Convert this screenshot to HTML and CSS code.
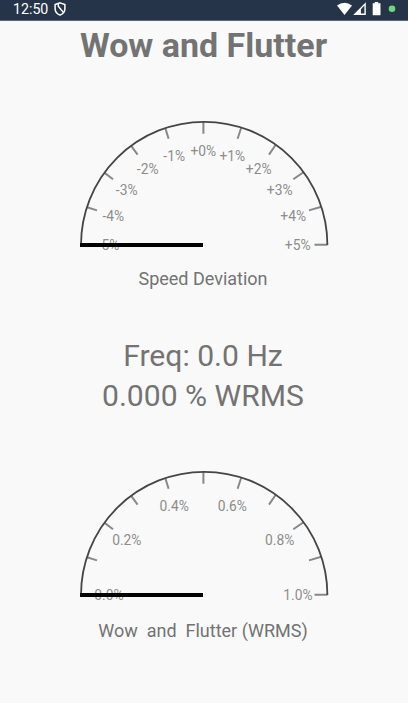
FILE: index.html
```
<!DOCTYPE html>
<html lang="en">
<head>
<meta charset="utf-8">
<title>Wow and Flutter</title>
<link rel="stylesheet" href="styles.css">
</head>
<body>
<header class="status">
  <span class="clock">12:50</span>
  <svg class="shield" width="12" height="14" viewBox="0 0 12 14"><path d="M6 .9 10.900 2.600V6.500Q10.900 11.200 6 13.100Q1.100 11.200 1.100 6.500V2.600Z"/><path d="M4.300 1.600V4.200L9.300 10.400"/></svg>
  <svg class="signals" width="60" height="16" viewBox="0 0 60 16"><path d="M0 4.500Q7.500-.8 15 4.500L7.500 14Z"/><path fill-rule="evenodd" d="M28.800 1.200V14H16.200ZM27.400 4.600 23.900 8.200V12.600H27.400Z"/><path d="M37.800 1H41.200V2.300H43.500V14.200H35.700V2.300H37.800Z"/><circle class="dot" cx="55" cy="7.700" r="3.300"/></svg>
</header>
<main class="screen">
  <h1 class="title">Wow and Flutter</h1>
  <svg class="gauge" width="260" height="140" viewBox="74 114 260 140">
    <g class="ticks">
      <path d="M203.400 122V133.700M165.200 127.800 168.600 138.800M131 145.600 137.600 154.600M104.300 172.600 113 179.300M87 207.300 97 210.400M241.200 127.800 237.600 138.800M275.600 145 269 154.600M303.500 172.300 293.300 179.300M321.300 206.800 309 210.400M327.400 244.800H314.500"/>
    </g>
    <path class="arc" d="M81 245A123.200 123.200 0 0 1 327.400 245"/>
    <g class="labels">
      <text x="108.600" y="250">-5%</text><text x="113.300" y="220.700">-4%</text><text x="126.700" y="194.500">-3%</text><text x="147.700" y="174">-2%</text><text x="174.200" y="160.500">-1%</text><text x="203.300" y="155.500">+0%</text><text x="232.300" y="160.500">+1%</text><text x="258.700" y="174">+2%</text><text x="279.700" y="194.500">+3%</text><text x="293.200" y="220.700">+4%</text><text x="297.700" y="250">+5%</text>
    </g>
    <path class="needle" d="M80 245H203"/>
  </svg>
  <p class="caption">Speed Deviation</p>
  <div class="readout"><p>Freq: 0.0 Hz</p><p>0.000 % WRMS</p></div>
  <svg class="gauge" width="260" height="140" viewBox="74 114 260 140">
    <g class="ticks">
      <path d="M203.400 122V133.700M165.200 127.800 168.600 138.800M131 145.600 137.600 154.600M104.300 172.600 113 179.300M87 207.300 97 210.400M241.200 127.800 237.600 138.800M275.600 145 269 154.600M303.500 172.300 293.300 179.300M321.300 206.800 309 210.400M327.400 244.800H314.500"/>
    </g>
    <path class="arc" d="M81 245A123.200 123.200 0 0 1 327.400 245"/>
    <g class="labels">
      <text x="109" y="250">0.0%</text><text x="126.800" y="194.500">0.2%</text><text x="174.200" y="160.500">0.4%</text><text x="232.300" y="160.500">0.6%</text><text x="279.700" y="194.500">0.8%</text><text x="298" y="250">1.0%</text>
    </g>
    <path class="needle" d="M80 245H203"/>
  </svg>
  <p class="caption caption-low">Wow&nbsp; and&nbsp; Flutter (WRMS)</p>
</main>
</body>
</html>
```
FILE: styles.css
```
* { box-sizing: border-box; }
body { margin: 0; height: 703px; overflow: hidden; background: #f9f9f9; color: #737373; font-family: Roboto, sans-serif; }
h1, p { margin: 0; }
.status { display: flex; align-items: flex-start; height: 21px; padding: 0 11px 0 13px; background: #263449; border-bottom: 1px solid #59657a; color: #fff; }
.clock { font-size: 14.2px; line-height: 18px; width: 36px; white-space: nowrap; }
.shield { margin: 2px 0 0 5px; fill: none; stroke: #fff; stroke-width: 1.5; }
.signals { margin: 1px 0 0 auto; fill: #fff; }
.dot { fill: #70d781; }
.screen { display: flex; flex-direction: column; align-items: center; padding-right: 2px; }
.title { height: 50px; font-size: 34px; line-height: 48px; font-weight: 700; white-space: nowrap; padding-left: 1px; }
.gauge { display: block; margin: 43px 0 0 2px; }
.arc { fill: none; stroke: #454545; stroke-width: 1.8; }
.ticks { fill: none; stroke: #888; stroke-width: 2; }
.needle { fill: none; stroke: #000; stroke-width: 4; }
.labels { fill: #8c8c8c; font-size: 13.8px; text-anchor: middle; }
.caption { height: 24px; margin-top: 13px; font-size: 18px; line-height: 24px; white-space: nowrap; }
.readout { margin-top: 45px; height: 80px; font-size: 30.1px; line-height: 40px; text-align: center; white-space: nowrap; }
.readout + .gauge { margin-top: 48px; }
.caption-low { margin-top: 15px; }
```
